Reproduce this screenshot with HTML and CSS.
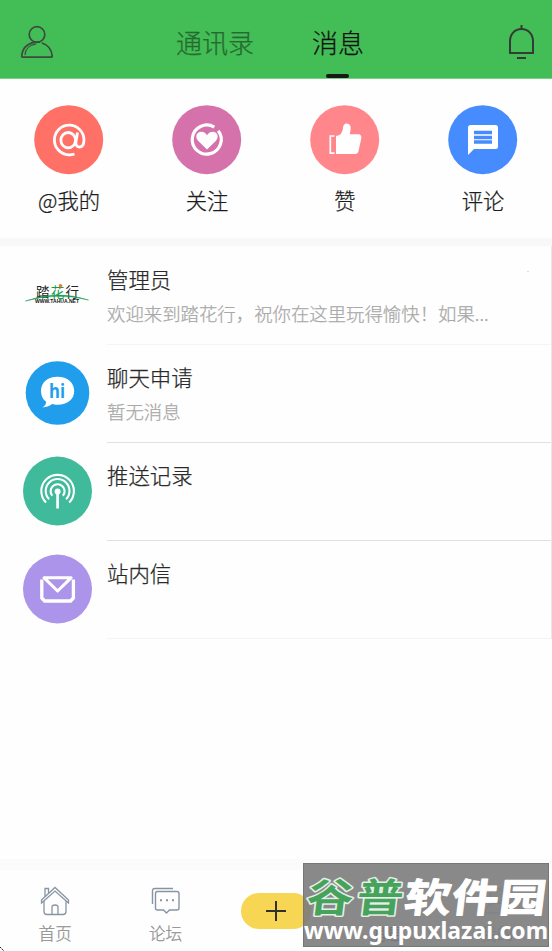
FILE: index.html
```html
<!DOCTYPE html>
<html lang="zh-CN">
<head>
<meta charset="utf-8">
<title>消息</title>
<link rel="stylesheet" href="styles.css">
</head>
<body>
<div class="app">
  <header class="topbar">
    <svg class="user" width="34" height="34" viewBox="0 0 34 34" fill="none" stroke="#3c4a40" stroke-width="1.7" stroke-linecap="round"><circle cx="17" cy="9.5" r="7.8"/><path d="M19 17.2C11 16.2 2.3 21 1.7 31Q1.6 32.2 3 32.2H31Q32.4 32.2 32.2 31C31.8 25 28 20 22.5 18.2"/><path d="M15.5 19.2C9.5 20 5.5 24 5.1 29.5" stroke-width="1.3"/></svg>
    <nav class="tabs"><span class="tab">通讯录</span><span class="tab active">消息</span></nav>
    <svg class="bell" width="28" height="36" viewBox="0 0 28 36" fill="none" stroke="#353a36" stroke-width="2"><path d="M2 29V17.5C2 10 7 5 13.5 5S25 10 25 17.5V29Z"/><path d="M13.5 1V5M9 34H18"/></svg>
  </header>
  <section class="shortcuts">
    <div class="shortcut"><svg width="70" height="70" viewBox="0 0 70 70"><circle cx="34.7" cy="34.7" r="34.5" fill="#ff7067"/><g fill="none" stroke="#fff" stroke-width="2.8"><path d="M40.5 49Q37.5 50 34.5 49.8A14.8 14.8 0 1 1 50 35C50 40 47.8 42 45.3 42C42.5 42 41.6 39.5 42 36.5L43.5 27.5"/><ellipse cx="34.2" cy="35.2" rx="7.3" ry="7.7"/></g></svg><span>@我的</span></div>
    <div class="shortcut"><svg width="70" height="70" viewBox="0 0 70 70"><circle cx="34.7" cy="34.7" r="34.5" fill="#d672ab"/><path d="M42.3 22.2A14.5 14.5 0 1 0 46.2 25.7" fill="none" stroke="#fff" stroke-width="3.2"/><path d="M35 44.5L26.3 36.1C22 31 25.5 26.7 29 26.7C32 26.7 34 28.5 35 30.2C36 28.5 38 26.7 41 26.7C44.5 26.7 48 31 43.7 36.1Z" fill="#fff"/></svg><span>关注</span></div>
    <div class="shortcut"><svg width="70" height="70" viewBox="0 0 70 70"><circle cx="34.7" cy="34.7" r="34.5" fill="#ff878c"/><path d="M24.5 31H20.3V48.2H24.5" fill="none" stroke="#fff" stroke-width="1.7"/><path d="M26 31Q32.5 30 33 23Q33.2 18.5 36.7 18.5Q41 18.7 40.7 23.7L39.8 29.3H48.5Q51.8 29.5 51.3 33.5L48.5 46Q48 49 45 49H26Z" fill="#fff"/></svg><span>赞</span></div>
    <div class="shortcut"><svg width="70" height="70" viewBox="0 0 70 70"><circle cx="34.7" cy="34.7" r="34.5" fill="#468cff"/><path d="M20 50V22.5Q20 20 22.5 20H47.5Q50 20 50 22.5V41.5Q50 44 47.5 44H26Z" fill="#fff"/><path d="M26 27.5H44M26 32.5H44M26 37H44" stroke="#468cff" stroke-width="3.4"/></svg><span>评论</span></div>
  </section>
  <main class="list">
    <article class="row">
      <div class="avatar"><svg width="70" height="70" viewBox="0 0 70 70"><text class="logo-name" x="14" y="36.5" textLength="43">踏<tspan fill="#159b50">花</tspan>行</text><circle cx="38.5" cy="25.7" r="1.8" fill="#f37a2b"/><path d="M3.5 41Q35 29.5 66.5 40Q35 32 3.5 41Z" fill="#159b50" stroke="#159b50" stroke-width=".5"/><text class="logo-url" x="13" y="43" textLength="44" lengthAdjust="spacingAndGlyphs">WWW.TAHUA.NET</text></svg></div>
      <div class="content"><h2>管理员</h2><p>欢迎来到踏花行，祝你在这里玩得愉快！如果...</p></div><i class="dot"></i>
    </article>
    <article class="row">
      <div class="avatar"><svg width="70" height="70" viewBox="0 0 70 70"><circle cx="35.5" cy="35" r="31.8" fill="#209eec"/><path d="M35.5 18.8C45.5 18.8 52.2 24.7 52.2 33S45.5 46.8 35.5 46.8C33 46.8 31.5 46.5 30 46.1C27.5 48.5 24 49.2 20.5 49.5C22.8 48 24.1 46 24.2 44C20.7 41.3 19 37.5 19 33C19 24.7 25.5 18.8 35.5 18.8Z" fill="#fff"/><text class="hi" x="27" y="39.8" textLength="16" lengthAdjust="spacingAndGlyphs">hi</text></svg></div>
      <div class="content strong"><h2>聊天申请</h2><p>暂无消息</p></div>
    </article>
    <article class="row">
      <div class="avatar"><svg width="70" height="70" viewBox="0 0 70 70"><circle cx="35.5" cy="35" r="34.5" fill="#3fbb9b"/><g transform="translate(.6)"><g fill="none" stroke="#fff" stroke-width="2.1"><path d="M23.4 46.6A16.3 16.3 0 1 1 46.6 46.6"/><path d="M26.5 43.2A11.9 11.9 0 1 1 43.5 43.2"/><path d="M29.7 39.8A7 7 0 1 1 40.3 39.8"/></g><circle cx="35" cy="35.5" r="3" fill="#fff"/><path d="M35 35V52.5" stroke="#fff" stroke-width="2.7"/></g></svg></div>
      <div class="content strong"><h2>推送记录</h2></div>
    </article>
    <article class="row">
      <div class="avatar"><svg width="70" height="70" viewBox="0 0 70 70"><circle cx="35.5" cy="35" r="34.5" fill="#ab94ea"/><g transform="translate(.6)"><path d="M19.2 25.5V44L22 47H48L50.8 44V25.5" fill="none" stroke="#fff" stroke-width="3.3"/><path d="M21.5 23.8H48.5L35 37Z" fill="none" stroke="#fff" stroke-width="3.1" stroke-linejoin="round"/></g></svg></div>
      <div class="content"><h2>站内信</h2></div>
    </article>
  </main>
  <footer class="bottom">
    <div class="nav-item"><svg width="30" height="30" viewBox="0 0 30 30" fill="none" stroke="#8795a3" stroke-width="1.3"><path d="M1.5 14L15 1.5L28.5 14V17L15 5L1.5 17Z"/><path d="M4 15V25.5Q4 28.5 7 28.5H23Q26 28.5 26 25.5V15M5 10.5V2.5H8.5V7M12 28V21Q12 19 15 19T18 21V28"/></svg><span>首页</span></div>
    <div class="nav-item"><svg width="30" height="30" viewBox="0 0 30 30" fill="none" stroke="#8795a3" stroke-width="1.4"><path d="M1.5 18V5Q1.5 2.5 4 2.5H22"/><path d="M6.5 5.5H26Q28 5.5 28 7.5V22Q28 24 26 24H18.5L15.5 27L12.5 24H6.5Q4.5 24 4.5 22V7.5Q4.5 5.5 6.5 5.5Z"/><path d="M9 14.3H11M15 14.3H17M21 14.3H23" stroke-width="2"/></svg><span>论坛</span></div>
    <div class="nav-item"><div class="add"><svg width="20" height="20" viewBox="0 0 20 20"><path d="M10 0V20M0 10H20" stroke="#30302f" stroke-width="2"/></svg></div></div>
    <div class="nav-item selected"><svg width="30" height="30" viewBox="0 0 30 30"><path d="M15 2C23 2 27 7 27 14S22 25 15 25L10 28V24C5 22 3 18 3 14C3 7 8 2 15 2Z" fill="#f6d653" stroke="#555"/></svg><span>消息</span></div>
    <div class="nav-item"><svg width="30" height="30" viewBox="0 0 30 30" fill="none" stroke="#8795a3"><circle cx="15" cy="9" r="7"/><path d="M3 27C4 20 9 17 15 17S26 20 27 27Z"/></svg><span>我的</span></div>
  </footer>
  <div class="watermark"><svg width="246" height="82" viewBox="0 0 246 82"><g transform="translate(0 47.5) skewX(-7)"><text class="wm-green" transform="scale(1.18 1)" x="1" y="0" textLength="82">谷普</text><text class="wm-white" transform="scale(1.18 1)" x="84" y="0" textLength="120">软件园</text></g><text class="wm-url" x="0" y="75" textLength="244" lengthAdjust="spacingAndGlyphs">www.gupuxlazai.com</text></svg></div>
  <svg class="corner" width="5" height="5" viewBox="0 0 5 5"><path d="M0 1L4 5" stroke="#222" stroke-dasharray="2 1"/></svg>
</div>
</body>
</html>
```
FILE: styles.css
```css
* { box-sizing: border-box; }
body { margin: 0; background: #fefefe; color: #2a2a2a; font-family: "Noto Sans CJK SC", sans-serif; font-weight: 300; -webkit-text-stroke: .25px currentColor; }
svg { display: block; flex: none; overflow: visible; -webkit-text-stroke: 0; }
.app { position: relative; width: 552px; height: 951px; overflow: hidden; display: flex; flex-direction: column; }
.topbar { height: 79px; flex: none; background: #43bd55; border-bottom: 1px solid #7bd087; display: flex; padding: 0 16px 0 20px; }
.user { margin-top: 25px; }
.bell { margin-top: 24px; margin-left: auto; }
.tabs { display: flex; gap: 58px; margin-left: 122px; }
.tab { height: 78px; font-size: 26px; line-height: 83px; color: #266a31; }
.active { color: #111; position: relative; }
.active::after { content: ""; position: absolute; left: 14px; bottom: 0; width: 23px; height: 4px; border-radius: 2px; background: #171b18; }
.shortcuts { height: 167px; flex: none; display: grid; grid-template-columns: repeat(4, 1fr); border-bottom: 8px solid #f8f8f8; padding-top: 26px; }
.shortcut { display: flex; flex-direction: column; align-items: center; font-size: 21.3px; line-height: 30px; gap: 10px; color: #1c1c1c; }
.list { height: 393px; flex: none; border-right: 1px solid #e8e8e8; }
.row { position: relative; height: 98px; display: flex; gap: 14px; padding-left: 22px; }
.avatar { width: 70px; padding-top: 14px; }
.content { flex: 1; padding-top: 17px; border-bottom: 1px solid #f4f4f4; position: relative; top: 1px; margin-left: 1px; }
.strong { border-bottom-color: #e0e0e0; }
h2 { margin: 0; font-size: 21.4px; font-weight: 300; line-height: 30px; }
p { margin: 5px 0 0; font-size: 18.4px; line-height: 28px; color: #a8a8a8; white-space: nowrap; }
.dot { position: absolute; right: 22px; top: 25px; width: 2px; height: 1px; background: #ddd; }
.logo-name { font-size: 13.5px; fill: #222; font-weight: 400; }
.logo-url { font: bold 4.6px "Liberation Sans", sans-serif; fill: #111; }
.hi { font: bold 20px "Open Sans", sans-serif; fill: #209eec; }
.bottom { margin-top: auto; height: 92px; flex: none; border-top: 11px solid #fbfbfb; display: grid; grid-template-columns: repeat(5, 1fr); }
.nav-item { display: flex; flex-direction: column; align-items: center; padding-top: 16px; gap: 5px; font-size: 16.6px; line-height: 24px; color: #929292; }
.add { width: 70px; height: 36px; margin-top: 7px; border-radius: 18px; background: #f6d653; display: flex; align-items: center; justify-content: center; }
.selected { color: #333; }
.watermark { position: absolute; left: 303px; top: 863px; width: 246px; height: 84px; background: rgba(124, 124, 124, .9); border: 1px solid #777; }
.wm-green, .wm-white { font-size: 39.5px; font-weight: 700; paint-order: stroke; stroke-linejoin: round; }
.wm-green { fill: #45a35b; stroke: #e5eee7; stroke-width: 3px; }
.wm-white { fill: #fff; stroke: #fff; stroke-width: 1px; }
.wm-url { font: bold 24px "Noto Sans", sans-serif; fill: #fff; }
.corner { position: absolute; left: 0; bottom: 0; }
```
